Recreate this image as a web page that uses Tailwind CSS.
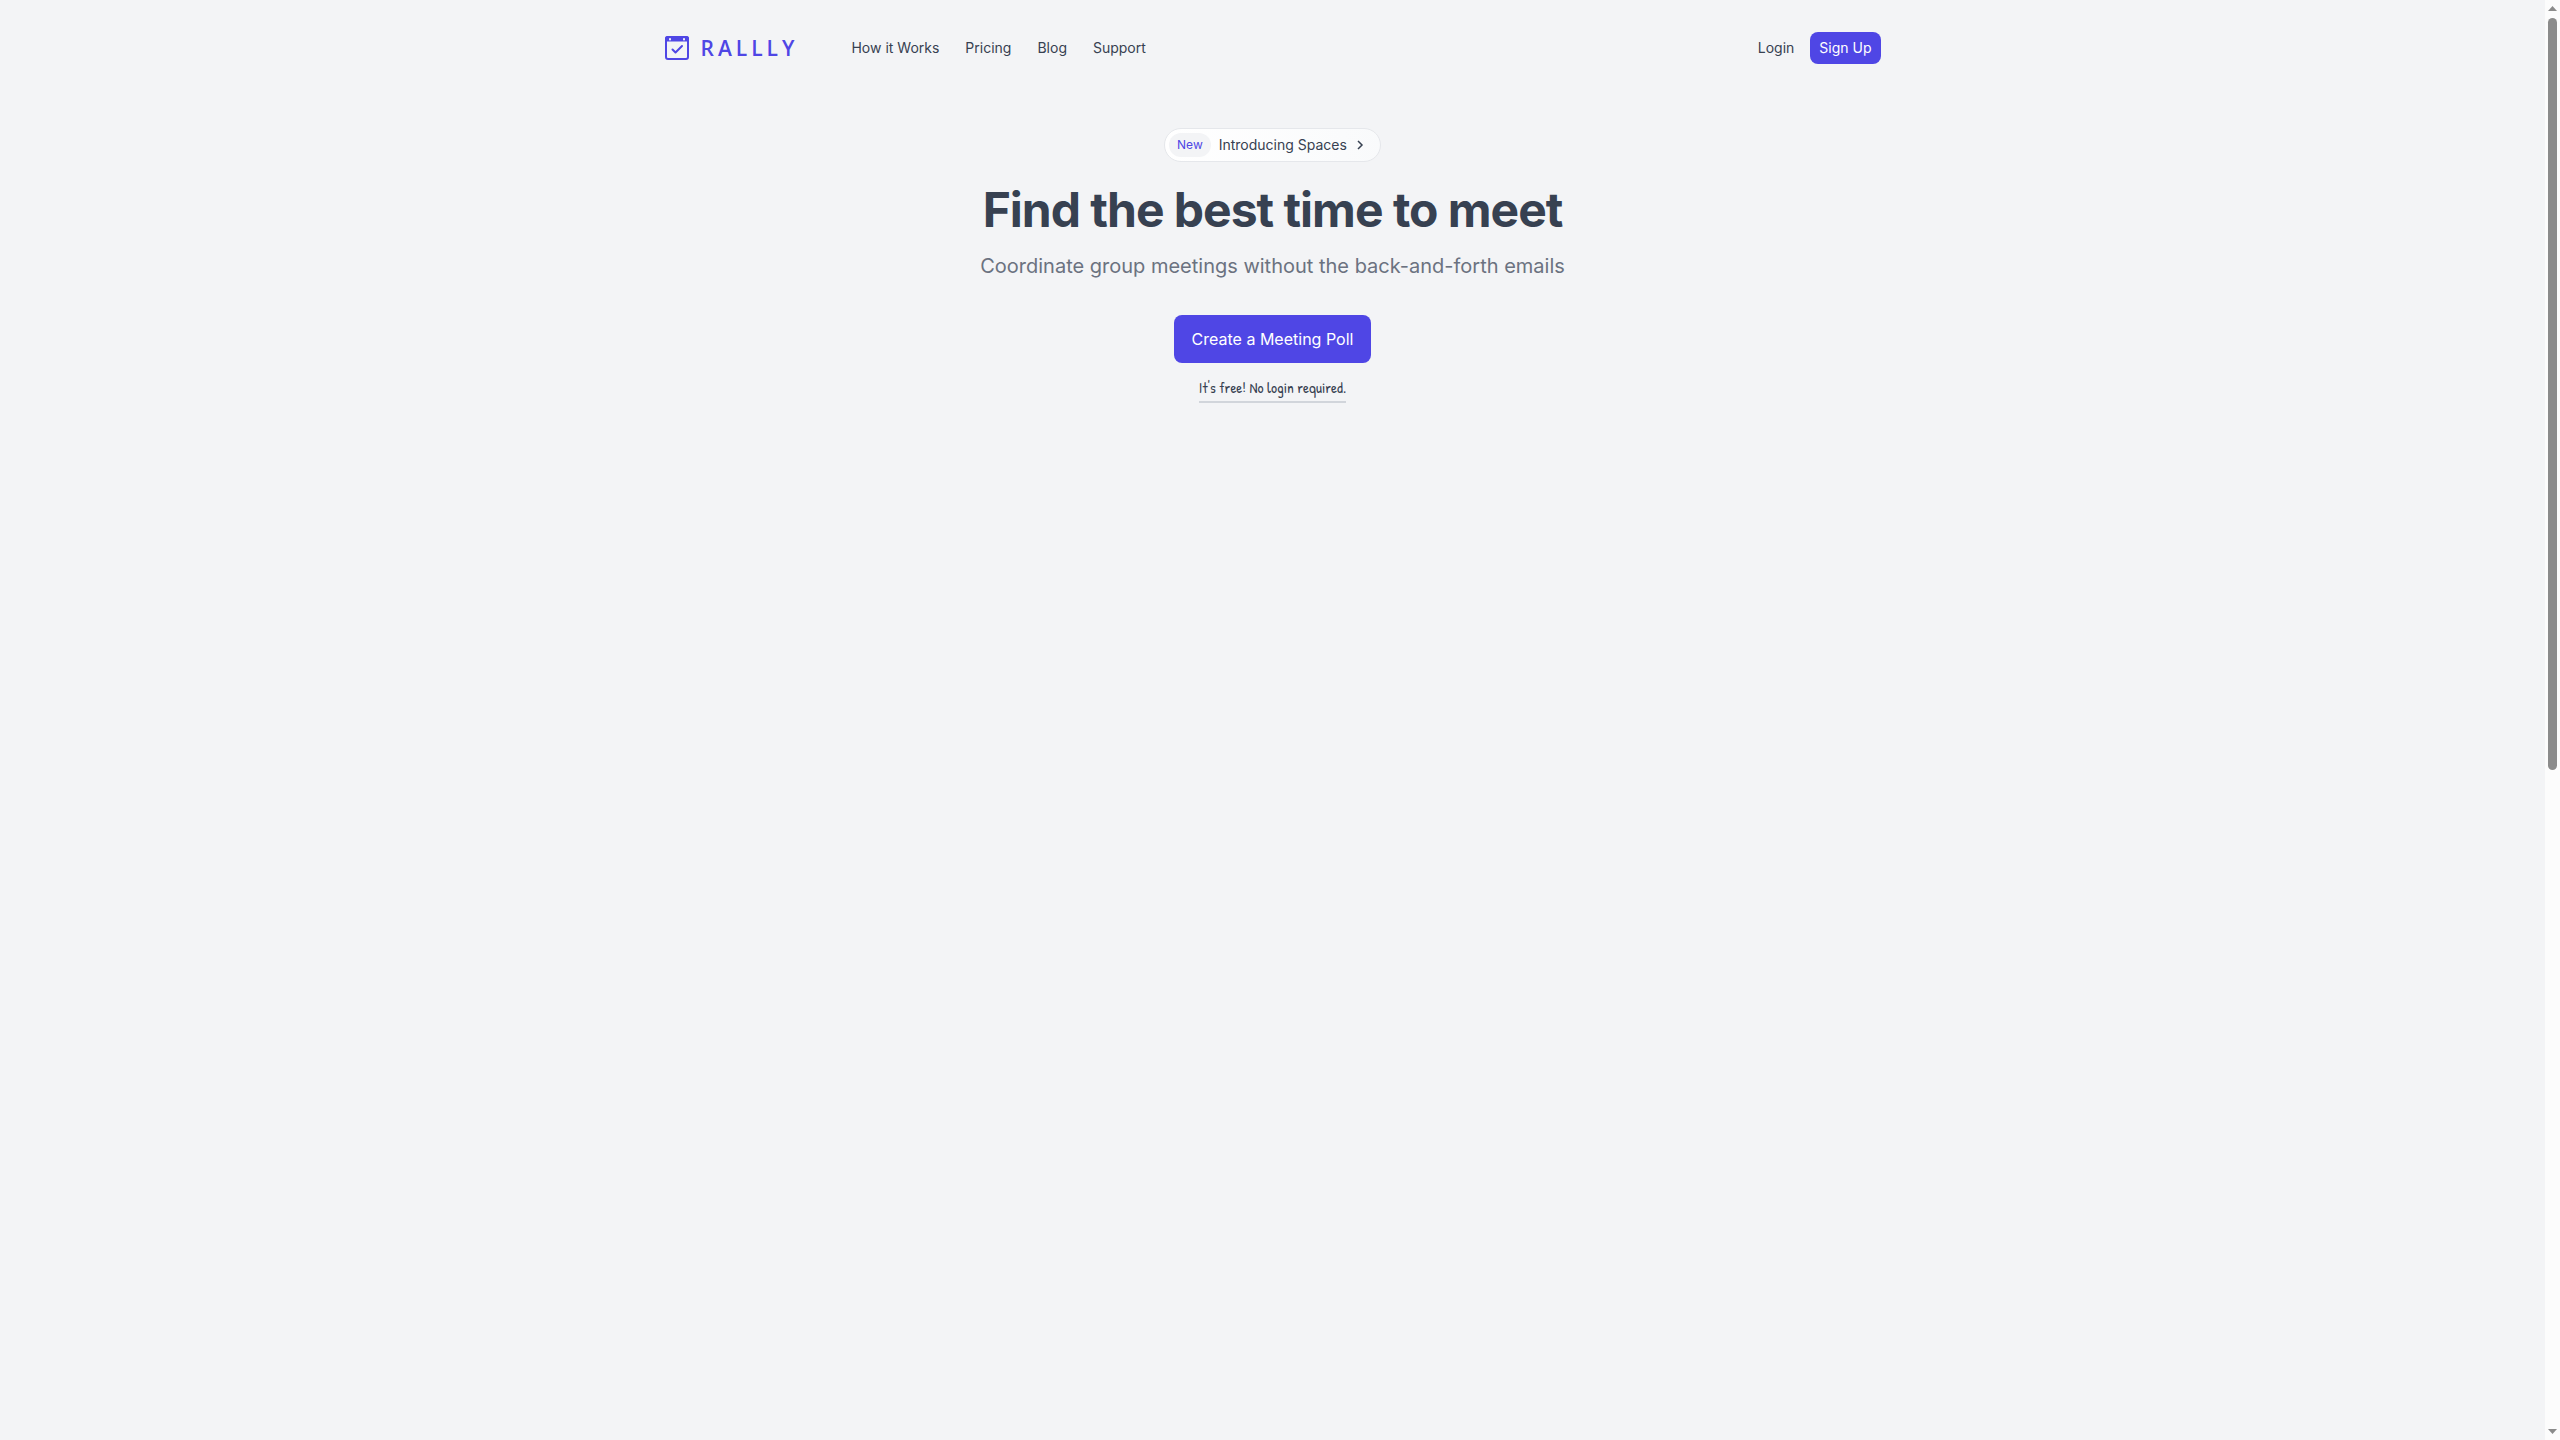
<!DOCTYPE html>
<html lang="en">
<head>
  <meta charset="UTF-8" />
  <meta name="viewport" content="width=device-width, initial-scale=1.0"/>
  <title>Rallly - Find the best time to meet</title>
  <script src="https://cdn.jsdelivr.net/npm/@tailwindcss/browser@4"></script>
</head>
<body class="bg-gray-100 font-['Inter',sans-serif] text-[#374151]">

  <div class="flex h-screen overflow-hidden">
    <div class="min-w-0 flex-1">
      <div class="mx-auto max-w-7xl px-8">

        <!-- Header -->
        <header class="flex items-center justify-between py-8">
          <div class="flex items-center">
            <a href="#" class="flex items-center gap-3 text-[#4f46e5]">
              <svg class="size-6" viewBox="0 0 24 24" fill="none" aria-hidden="true">
                <rect x="1" y="1" width="22" height="22" rx="2" stroke="currentColor" stroke-width="2"/>
                <path d="M0 5.500V2.500Q0 0 2.500 0H21.500Q24 0 24 2.500V5.500Z" fill="currentColor"/>
                <rect x="4" y="2" width="2" height="2.500" rx="1" class="fill-gray-100"/>
                <rect x="18" y="2" width="2" height="2.500" rx="1" class="fill-gray-100"/>
                <path d="M7.500 13.500L10.500 16.500L17 10" stroke="currentColor" stroke-width="2" stroke-linecap="round" stroke-linejoin="round"/>
              </svg>
              <span class="font-['Open_Sans',sans-serif] text-[21px] leading-8 font-semibold tracking-[4px]">RALLLY</span>
            </a>
            <nav class="ml-[53px] flex gap-[26px] text-sm">
              <a href="#">How it Works</a>
              <a href="#">Pricing</a>
              <a href="#">Blog</a>
              <a href="#">Support</a>
            </nav>
          </div>
          <div class="flex items-center gap-4 text-sm">
            <a href="#">Login</a>
            <a href="#" class="flex h-8 items-center rounded-lg bg-[#4f46e5] px-[9px] text-white">Sign Up</a>
          </div>
        </header>

        <!-- Hero -->
        <main class="flex flex-col items-center pt-8 text-center">
          <a href="#" class="flex h-[34px] items-center gap-2 rounded-full border border-gray-200 bg-gray-50 bg-linear-to-r from-white to-gray-50 pr-4 pl-1 text-sm">
            <span class="rounded-full bg-gray-100 px-2 py-1 text-xs leading-4 text-[#4f46e5]">New</span>
            <span>Introducing Spaces</span>
            <svg class="-mr-1 -ml-[3px] size-4" viewBox="0 0 16 16" fill="none" stroke="currentColor" stroke-width="1.500" aria-hidden="true">
              <path d="M6 4l4 4-4 4"/>
            </svg>
          </a>
          <h1 class="mt-6 text-5xl leading-12 font-bold tracking-[-1px]">Find the best time to meet</h1>
          <p class="mt-4 text-xl leading-8 text-[#6b7280]">Coordinate group meetings without the back-and-forth emails</p>
          <button type="button" class="mt-[33px] h-12 rounded-lg bg-[#4f46e5] px-[18px] text-base text-white">Create a Meeting Poll</button>
          <p class="mt-4 border-b-2 border-[#d1d5db] pb-1 font-['Patrick_Hand','Open_Sans',sans-serif] text-[15px] leading-[18px]">It's free! No login required.</p>
        </main>

      </div>
    </div>

    <!-- Scroll bar -->
    <div class="flex w-[15px] flex-col items-center justify-between bg-[#fcfcfc] py-[6px] text-[#8b8b8b]" aria-hidden="true">
      <svg class="h-[5px] w-[9px]" viewBox="0 0 9 5" fill="currentColor"><path d="M4.500 0L9 5H0Z"/></svg>
      <div class="flex w-full flex-1 flex-col items-center pt-[7px]">
        <div class="h-[53.3%] w-[9px] rounded-full bg-[#8b8b8b]"></div>
      </div>
      <svg class="h-[5px] w-[9px]" viewBox="0 0 9 5" fill="currentColor"><path d="M4.500 5L9 0H0Z"/></svg>
    </div>
  </div>

</body>
</html>
